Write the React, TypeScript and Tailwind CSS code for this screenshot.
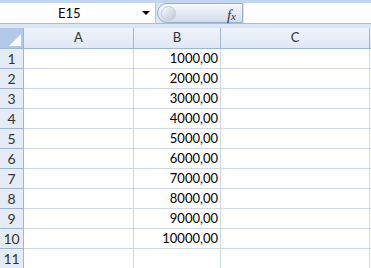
import React from "react";

const rows = [
  "1000,00",
  "2000,00",
  "3000,00",
  "4000,00",
  "5000,00",
  "6000,00",
  "7000,00",
  "8000,00",
  "9000,00",
  "10000,00",
  "",
];

export default function App() {
  return (
    <div
      className="w-[371px] h-[268px] overflow-hidden bg-[#dbe6f4] text-[13px] text-black"
      style={{ fontFamily: "Lato, 'Open Sans', sans-serif" }}
    >
      {/* top strip */}
      <div className="h-[3px] bg-[#c4d6ee]" />

      {/* formula bar */}
      <div className="h-[21px] flex items-stretch bg-[#dbe6f4] border-b border-[#a7bcd6]">
        <div className="w-[156px] bg-white border-r border-[#b6c7dc] relative">
          <span className="absolute left-[58px] top-[1px]">E15</span>
          <span className="absolute left-[142px] top-[8px] w-0 h-0 border-l-[4px] border-r-[4px] border-t-[4px] border-l-transparent border-r-transparent border-t-black" />
        </div>
        <div className="w-[86px] ml-[1px] rounded-l-full bg-gradient-to-b from-[#f6f9fd] to-[#d0dcee] border border-[#98aecb] flex items-center relative">
          <span className="ml-[3px] w-[15px] h-[15px] rounded-full bg-gradient-to-br from-[#f8f9fb] to-[#bfc8d4] border border-[#c2ccd8]" />
          <span
            className="absolute right-[6px] top-[0px] italic text-[15px] text-[#333]"
            style={{ fontFamily: "'Liberation Serif', serif" }}
          >
            f<span className="text-[11px]">x</span>
          </span>
        </div>
        <div className="flex-1 bg-white ml-[1px]" />
      </div>

      <div className="h-[4px]" />

      {/* column headers */}
      <div className="flex h-[21px] border-b border-[#9eb6ce] bg-gradient-to-b from-[#f0f4fa] to-[#dfe8f5] text-[#333]">
        <div className="w-[24px] border-r border-[#9eb6ce] bg-[#b2c9ea] relative">
          <svg className="absolute right-[2px] bottom-[2px]" width="12" height="12" viewBox="0 0 12 12">
            <polygon points="12,0 12,12 0,12" fill="#ffffff" opacity="0.9" />
          </svg>
        </div>
        <div className="w-[110px] border-r border-[#9eb6ce] flex items-center justify-center">A</div>
        <div className="w-[87px] border-r border-[#9eb6ce] flex items-center justify-center">B</div>
        <div className="w-[149px] border-r border-[#9eb6ce] flex items-center justify-center">C</div>
        <div className="flex-1" />
      </div>

      {/* rows */}
      {rows.map((v, i) => (
        <div key={i} className="flex h-[20px] bg-white">
          <div className="w-[24px] border-r border-b border-[#9eb6ce] bg-[#e4ecf7] flex items-center justify-center text-[#333] text-[14px]">
            {i + 1}
          </div>
          <div className="w-[110px] border-r border-b border-[#d0d7e5]" />
          <div className="w-[87px] border-r border-b border-[#d0d7e5] flex items-center justify-end pr-[2px]">
            {v}
          </div>
          <div className="w-[149px] border-r border-b border-[#d0d7e5]" />
          <div className="flex-1 border-b border-[#d0d7e5]" />
        </div>
      ))}
    </div>
  );
}
